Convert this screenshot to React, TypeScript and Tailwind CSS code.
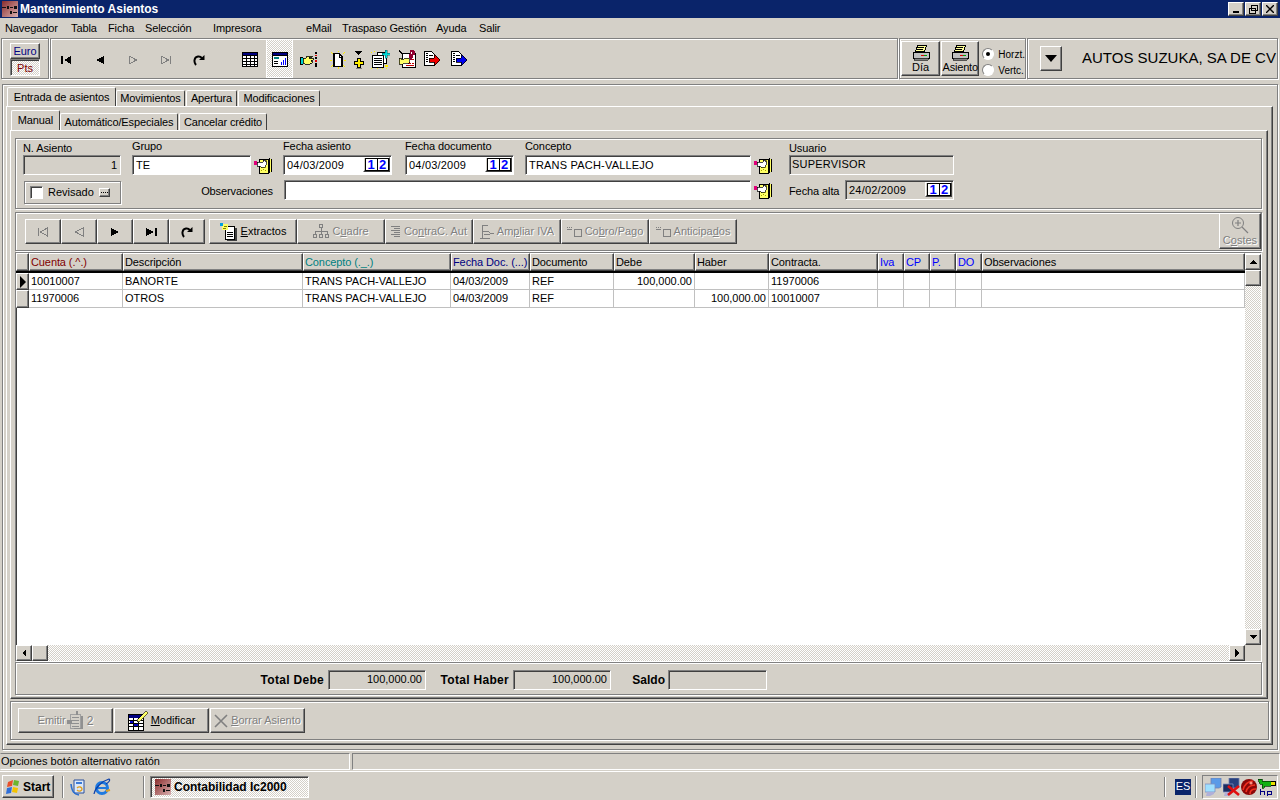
import React from 'react'

const raised = 'border border-t-white border-l-white border-r-[#404040] border-b-[#404040] shadow-[inset_-1px_-1px_0_#808080]'
const sunken = 'border border-t-[#808080] border-l-[#808080] border-r-white border-b-white shadow-[inset_1px_1px_0_#404040]'
const etched = 'border border-[#808080] shadow-[inset_1px_1px_0_#fff,1px_1px_0_#fff]'
const dither = 'bg-[repeating-conic-gradient(#fff_0_25%,#d4d0c8_0_50%)] bg-[length:2px_2px]'
const dim = 'text-[#808080] [text-shadow:1px_1px_0_#fff]'

function Ico({ w = 16, h = 16, children }: { w?: number; h?: number; children: React.ReactNode }) {
  return (
    <svg width={w} height={h} viewBox={`0 0 ${w} ${h}`} shapeRendering="crispEdges" className="shrink-0">
      {children}
    </svg>
  )
}

const AppLogo = () => (
  <Ico>
    <defs>
      <linearGradient id="lg" x1="0" y1="0" x2="1" y2="1">
        <stop offset="0" stopColor="#8a2c2c" />
        <stop offset="1" stopColor="#d8b0b0" />
      </linearGradient>
    </defs>
    <rect width="16" height="16" fill="url(#lg)" />
    <path d="M0 6h4v1H0zM5 5h2v3H5zM8 6h3v1H8zM12 5h3v3h-3zM8 10h2v3H8zM11 11h4v1h-4z" fill="#111" />
  </Ico>
)

const First = ({ off }: { off?: boolean }) => (
  <Ico w={12} h={10}>
    {off ? (
      <path d="M1 0.5V9M10.5 1L3 5l7.5 4z" fill="none" stroke="#808080" />
    ) : (
      <path d="M0 1h2v8H0zM10 1v8L3 5z" fill="#000" />
    )}
  </Ico>
)
const Prev = ({ off }: { off?: boolean }) => (
  <Ico w={10} h={10}>
    {off ? <path d="M9 1L1.5 5 9 9z" fill="none" stroke="#808080" /> : <path d="M9 1v8L1 5z" fill="#000" />}
  </Ico>
)
const Next = ({ off }: { off?: boolean }) => (
  <Ico w={10} h={10}>
    {off ? <path d="M1 1L8.5 5 1 9z" fill="none" stroke="#808080" /> : <path d="M1 1v8l8-4z" fill="#000" />}
  </Ico>
)
const Last = ({ off }: { off?: boolean }) => (
  <Ico w={12} h={10}>
    {off ? (
      <path d="M10.5 0.5V9M1 1l7.5 4L1 9z" fill="none" stroke="#808080" />
    ) : (
      <path d="M10 1h2v8h-2zM1 1v8l8-4z" fill="#000" />
    )}
  </Ico>
)
const Refresh = () => (
  <svg width="12" height="12" viewBox="0 0 12 12" className="shrink-0">
    <path d="M3 11C0.5 8 1 3 5 2.5c1.8-.2 3 .4 3.8 1.6" fill="none" stroke="#000" strokeWidth="2" />
    <path d="M6 6h5.5V1z" fill="#000" />
  </svg>
)
const TableIco = () => (
  <Ico w={16} h={15}>
    <rect width="16" height="15" fill="#000" />
    <rect x="1" y="1" width="14" height="2" fill="#000080" />
    <rect x="1" y="4" width="14" height="10" fill="#fff" />
    <path d="M1 6h14v1H1zM1 9h14v1H1zM1 12h14v1H1zM4 4h1v10H4zM8 4h1v10H8zM12 4h1v10h-1z" fill="#000" />
  </Ico>
)
const ChartIco = () => (
  <Ico w={16} h={15}>
    <rect width="16" height="15" fill="#000" />
    <rect x="1" y="1" width="14" height="2" fill="#000080" />
    <rect x="1" y="4" width="14" height="10" fill="#fff" />
    <path d="M2 5h5v2H2z" fill="#008080" />
    <path d="M2 9h4v1H2zM2 11h4v1H2z" fill="#000" />
    <path d="M9 10h1v3H9zM11 8h1v5h-1zM13 6h1v7h-1z" fill="#0000ff" />
  </Ico>
)
const HandIco = () => (
  <Ico w={17} h={15}>
    <path d="M0 5h3v8H0z" fill="#000" />
    <path d="M1 6h2v6H1z" fill="#00d0d0" />
    <path d="M3 6h3l1-2h5v1h-3v1h4v2h-2v1h1v2h-2v1H5l-2-1z" fill="#ffff66" stroke="#000" strokeWidth="0.8" />
    <path d="M15 0h2v2h-2zM15 5h2v2h-2zM15 11h2v2h-2zM15 13h2v2h-2z" fill="#000" />
    <path d="M15 3h2v1h-2zM15 8h2v2h-2z" fill="#e00000" />
  </Ico>
)
const NewDocIco = () => (
  <Ico w={16} h={18}>
    <path d="M1 1h1v1h1v1H2V2H1zM14 1h1v1h-1v1h-1V2h1zM0 9h2v1H0zM14 9h2v1h-2zM1 15h1v-1h1v1H2v1H1zM14 15h1v1h-1v-1h-1v-1h1zM8 16h1v2H8zM8 0h1v1H8z" fill="#ffee00" />
    <path d="M4 2.5h5l3 3v10H4z" fill="#fff" stroke="#000" strokeWidth="1.2" />
    <path d="M9 3v3h3" fill="none" stroke="#000" />
  </Ico>
)
const PlusIco = () => (
  <Ico w={11} h={18}>
    <path d="M2 0h7v1H8v1H7v1H6v1H5V3H4V2H3V1H2z" fill="#000" />
    <path d="M4 7h3v3h3v3H7v3H4v-3H1v-3h3z" fill="#ffee00" stroke="#000" />
    <path d="M3 17h6v1H3z" fill="#808080" />
  </Ico>
)
const DocsIco = () => (
  <Ico w={19} h={19}>
    <rect x="6.5" y="2.5" width="9" height="11" fill="#fff" stroke="#000" />
    <rect x="1.5" y="5.5" width="11" height="12" fill="#fff" stroke="#000" />
    <path d="M3 8h8v1H3zM3 10h8v1H3zM3 12h8v1H3zM3 14h8v1H3z" fill="#000" />
    <path d="M14 15h3v2h-3v-1zM0 2h1v1H0zM3 1h1v1H3zM0 18h1v1H0zM6 18h1v1H6zM11 18h1v1h-1zM15 18h1v1h-1z" fill="#ffee00" />
    <path d="M14 0h2v3h3v2h-3v3h-2V5h-3V3h3z" fill="#00d8d8" stroke="#004040" strokeWidth="0.4" />
  </Ico>
)
const DocQIco = () => (
  <Ico w={19} h={19}>
    <rect x="4.5" y="3.5" width="13" height="14" fill="#fff" stroke="#000" />
    <path d="M14 9h2v1h-2zM11 12h1v2h-1zM10 13h3v1h-3zM14 13h2v1h-2zM8 15h8v1H8z" fill="#c00000" />
    <path d="M1 8h2v1h3l2-1h3v5H7l-2 1H1z" fill="#ffff66" stroke="#000" strokeWidth="0.7" />
    <path d="M1 0h1v1h1v1h1v1h1v2H4V4H3V3H2V2H1z" fill="#000" />
    <path d="M11 0h5v1h1v4h-2v3h-4V4h1V1z" fill="#900030" />
    <path d="M12 8h2v2h-2z" fill="#900030" />
    <path d="M13 2h1v2h-1z" fill="#fff" />
  </Ico>
)
const ArrowDocIco = ({ color }: { color: string }) => (
  <Ico w={17} h={17}>
    <path d="M0.5 0.5h7l3 3v11H.5z" fill="#fff" stroke="#000" />
    <path d="M2 2h2v1H2zM2 4h2v1H2zM5 4h4v1H5zM2 6h2v1H2zM2 8h2v1H2zM2 10h2v1H2z" fill="#000" />
    <path d="M5 7h5V3l6 6-6 6v-4H5z" fill={color} stroke="#000" strokeWidth="0.8" />
  </Ico>
)
const LookupIco = () => (
  <Ico w={20} h={17}>
    <path d="M6 2h9v14H6z" fill="#ffff66" stroke="#000" />
    <path d="M8 10h1v1H8zM10 12h1v1h-1zM12 10h1v1h-1zM8 13h1v1H8zM12 13h1v1h-1zM10 4h1v1h-1zM13 3h1v1h-1z" fill="#a0a000" />
    <path d="M16 1h1v15h-1zM18 2h1v13h-1z" fill="#000" />
    <path d="M17 2h1v13h-1z" fill="#ffff66" />
    <path d="M4 5h6V3h2v1h1l1 3-2 2v1H8L6 9H4z" fill="#fff" stroke="#000" strokeWidth="0.7" />
    <path d="M1 4h3v4H1z" fill="#e0007a" />
  </Ico>
)
const PrinterIco = () => (
  <Ico w={18} h={16}>
    <path d="M5.5 0.5h9l-2 6h-9z" fill="#ffff99" stroke="#000" />
    <path d="M5 2h7v1H5zM5 4h6v1H5z" fill="#000" />
    <path d="M1 7h16v6H1z" fill="#c0c0c0" stroke="#000" />
    <path d="M2 13h14v2H2z" fill="#808080" stroke="#000" strokeWidth="0.6" />
    <path d="M9 10h3v1H9z" fill="#e00000" />
    <path d="M12 10h3v1h-3z" fill="#00a000" />
  </Ico>
)
const ExtractosIco = () => (
  <Ico w={18} h={18}>
    <path d="M5.5 3.5h9v13h-9z" fill="#fff" stroke="#000" />
    <path d="M7 9h6v1H7zM7 11h6v1H7zM7 13h6v1H7z" fill="#000" />
    <path d="M15 5h2v13H7v-1h8z" fill="#404040" />
    <path d="M2 1h6v6H2z" fill="#ffff66" />
    <path d="M0 0h3v3H0z" fill="#00a0e0" />
    <path d="M4 3h3v1H4zM3 5h3v1H3z" fill="#808000" />
  </Ico>
)
const CuadreIco = () => (
  <Ico w={16} h={15}>
    <path d="M6.5 0.5h3v3h-3zM0.5 10.5h3v3h-3zM12.5 10.5h3v3h-3zM6.5 10.5h3v3h-3zM8 4v6M2 10V7h12v3" fill="none" stroke="#808080" />
  </Ico>
)
const LinesIco = () => (
  <Ico w={10} h={11}>
    <path d="M0 0h9v1H0zM3 2h6v1H3zM0 4h9v1H0zM3 6h6v1H3zM0 8h9v1H0zM3 10h6v1H3z" fill="#808080" />
  </Ico>
)
const AmpliarIco = () => (
  <Ico w={14} h={14}>
    <path d="M2 0.5h6M2 0.5v12M0 13.5h10M2 6h6l2 2h4M4 9h6" fill="none" stroke="#808080" />
  </Ico>
)
const CobroIco = () => (
  <Ico w={15} h={11}>
    <path d="M0 1h1v1H0zM2 1h1v1H2zM4 1h1v1H4zM0 3h5v1H0z" fill="#808080" />
    <rect x="7.5" y="3.5" width="7" height="7" fill="none" stroke="#808080" />
  </Ico>
)
const LensIco = () => (
  <svg width="18" height="18" viewBox="0 0 18 18" className="shrink-0">
    <circle cx="7" cy="7" r="5.5" fill="none" stroke="#808080" />
    <path d="M7 4v6M4 7h6M11 11l6 6" stroke="#808080" strokeWidth="1.2" fill="none" />
  </svg>
)
const EmitirIco = () => (
  <Ico w={18} h={20}>
    <path d="M4.5 3.5h10v14h-10z" fill="none" stroke="#a0a0a0" />
    <path d="M6 6h7v1H6zM6 9h7v1H6zM6 12h7v1H6zM6 15h7v1H6zM10 0h2v4h-2zM1 9h5v4H1z" fill="#909090" />
    <path d="M15 5h2v13H8v-1h7z" fill="#909090" />
  </Ico>
)
const ModificarIco = () => (
  <Ico w={20} h={20}>
    <rect x="0.5" y="3.5" width="15" height="16" fill="#fff" stroke="#000" />
    <rect x="1" y="4" width="14" height="3" fill="#000080" />
    <path d="M1 9h14v1H1zM1 12h14v1H1zM1 15h14v1H1zM5 7h1v12H5zM10 7h1v12h-1z" fill="#000" />
    <path d="M2 10h3v2H2zM6 13h4v2H6z" fill="#0000c0" />
    <path d="M18 0l2 2-8 8-3 1 1-3z" fill="#ffff66" stroke="#000" strokeWidth="0.6" />
  </Ico>
)
const CrossIco = () => (
  <svg width="14" height="14" viewBox="0 0 14 14" className="shrink-0">
    <path d="M1 1l12 12M13 1L1 13" stroke="#808080" strokeWidth="1.6" />
  </svg>
)
const FlagIco = () => (
  <svg width="16" height="16" viewBox="0 0 16 16" className="shrink-0">
    <path d="M3 3l5-2-1 6-5 1z" fill="#e8502a" />
    <path d="M9 1l5 1-1 5-5-1z" fill="#6cb52d" />
    <path d="M2 9l5-1-1 6-5 1z" fill="#2f6fd8" />
    <path d="M8 8l5 1-1 5-5-1z" fill="#f4c300" />
  </svg>
)
const DesktopIco = () => (
  <svg width="16" height="18" viewBox="0 0 16 18" className="shrink-0">
    <path d="M4 2h10v13H4z" fill="#dbe8fa" stroke="#2a4f9a" />
    <path d="M6 4h6v2H6z" fill="#3a7ad8" />
    <path d="M1 6c1 8 3 10 8 11" fill="none" stroke="#2a6fd0" strokeWidth="1.6" />
    <path d="M7 10c2-2 5-1 5 1s-3 3-5 1" fill="none" stroke="#e0a020" strokeWidth="1.4" />
  </svg>
)
const IeIco = () => (
  <svg width="18" height="18" viewBox="0 0 18 18" className="shrink-0">
    <circle cx="9" cy="10" r="5.5" fill="none" stroke="#1f7ae0" strokeWidth="3" />
    <path d="M4 10h10" stroke="#1f7ae0" strokeWidth="2" />
    <path d="M1 16C2 10 9 3 16 1c2 1-1 4-3 5" fill="none" stroke="#0b3fa8" strokeWidth="1.2" />
    <path d="M13 13l4-1" stroke="#e0a020" strokeWidth="2" />
  </svg>
)
const NetIco = ({ x }: { x?: boolean }) => (
  <svg width="17" height="18" viewBox="0 0 17 18" className="shrink-0">
    <path d="M6 0h10v9l-2 1H6z" fill={x ? '#28407c' : '#5a9ae8'} stroke="#7080b0" strokeWidth="0.8" />
    <path d="M0 6h10v8H0z" fill={x ? '#1c2e60' : '#9fe0ff'} stroke="#8090c0" strokeWidth="0.8" />
    <path d="M2 14h7v2l-4 2H1z" fill="#b0b0d8" />
    {x && <path d="M5 8l11 9M16 8L5 17" stroke="#e01010" strokeWidth="2.6" />}
  </svg>
)
const BallIco = () => (
  <svg width="16" height="16" viewBox="0 0 16 16" className="shrink-0">
    <circle cx="8" cy="8" r="8" fill="#8c0808" />
    <path d="M2 11C3 6 7 2 12 2M5 13c1-4 4-7 9-7M9 15c0-3 2-5 6-5" fill="none" stroke="#f03020" strokeWidth="1.6" />
    <circle cx="10" cy="4" r="1.6" fill="#ff9080" />
  </svg>
)
const HpIco = () => (
  <Ico w={18} h={18}>
    <path d="M0 1h4v2h9v5H7l-1 2H4V6H2z" fill="#10b010" stroke="#003000" strokeWidth="0.7" />
    <path d="M12.5 3.5h5v4h-5" fill="none" stroke="#000" />
    <path d="M13 4h4v3h-4z" fill="#e8e000" />
    <path d="M2.5 11v6M2.5 13.5h4v3.5M9.5 13.5h4v3h-4zM9.5 13.5v5" fill="none" stroke="#000080" />
  </Ico>
)

// Calendar button with the two overlapping "12" pages
function CalBtn() {
  return (
    <div className={`w-[27px] h-[15px] mr-px mt-[1px] flex items-center justify-center bg-[#d4d0c8] ${raised} text-[#0000ff] font-bold text-[13px] leading-none`}>
      <span className="w-[12px] h-[13px] bg-white border-y border-l border-black flex items-center justify-center">1</span>
      <span className="w-[12px] h-[13px] bg-white border border-black flex items-center justify-center">2</span>
    </div>
  )
}

function DateInput({ value, grey, w = 'w-[109px]' }: { value: string; grey?: boolean; w?: string }) {
  return (
    <div className={`${w} h-[20px] ${sunken} ${grey ? '' : 'bg-white'} flex justify-between pl-[3px]`}>
      <span className="leading-[19px] tracking-[0.2px]">{value}</span>
      <CalBtn />
    </div>
  )
}

function Field({ label, low, className, children }: { label: string; low?: boolean; className: string; children: React.ReactNode }) {
  return (
    <div className={className}>
      <div className={`h-[14px] tracking-[-0.1px] whitespace-nowrap ${low ? 'leading-[15px]' : 'leading-[11px]'}`}>{label}</div>
      {children}
    </div>
  )
}

function Tab({ label, active, w }: { label: string; active?: boolean; w: string }) {
  return (
    <div
      className={`${w} border-t border-l border-r border-t-white border-l-white border-r-[#404040] rounded-t-[2px] flex items-center justify-center shrink-0 tracking-[-0.12px] ${
        active ? 'h-full relative z-10 -mb-px bg-[#d4d0c8]' : 'h-[calc(100%-3px)] mt-[3px] mr-[1px]'
      }`}
    >
      {label}
    </div>
  )
}

function ToolBtn({ w, off, icon, children }: { w: string; off?: boolean; icon?: React.ReactNode; children?: React.ReactNode }) {
  return (
    <div className={`${w} h-[25px] ${raised} flex items-center justify-center gap-[3px] shrink-0 whitespace-nowrap ${off ? dim : ''}`}>
      {icon}
      {children && <span>{children}</span>}
    </div>
  )
}

const menu = [
  { t: 'Navegador', w: 'w-[66px]' },
  { t: 'Tabla', w: 'w-[37px]' },
  { t: 'Ficha', w: 'w-[37px]' },
  { t: 'Selección', w: 'w-[68px]' },
  { t: 'Impresora', w: 'w-[93px]' },
  { t: 'eMail', w: 'w-[36px]' },
  { t: 'Traspaso Gestión', w: 'w-[94px]' },
  { t: 'Ayuda', w: 'w-[43px]' },
  { t: 'Salir', w: 'w-[30px]' },
]

const cols = 'grid grid-cols-[13px_94px_180px_148px_79px_84px_81px_74px_109px_26px_26px_26px_26px_263px]'

const headers = [
  { t: 'Cuenta (.^.)', c: 'text-[#800000]' },
  { t: 'Descripción', c: '' },
  { t: 'Concepto (._.)', c: 'text-[#008080]' },
  { t: 'Fecha Doc. (...)', c: 'text-[#000080]' },
  { t: 'Documento', c: '' },
  { t: 'Debe', c: '' },
  { t: 'Haber', c: '' },
  { t: 'Contracta.', c: '' },
  { t: 'Iva', c: 'text-[#0000ff]' },
  { t: 'CP', c: 'text-[#0000ff]' },
  { t: 'P.', c: 'text-[#0000ff]' },
  { t: 'DO', c: 'text-[#0000ff]' },
  { t: 'Observaciones', c: '' },
]

const rows = [
  { h: 'h-[17px]', sel: true, cells: ['10010007', 'BANORTE', 'TRANS PACH-VALLEJO', '04/03/2009', 'REF', '100,000.00', '', '11970006', '', '', '', '', ''] },
  { h: 'h-[18px]', sel: false, cells: ['11970006', 'OTROS', 'TRANS PACH-VALLEJO', '04/03/2009', 'REF', '', '100,000.00', '10010007', '', '', '', '', ''] },
]

const ArrowBtn = ({ dir }: { dir: 'up' | 'down' | 'left' | 'right' }) => (
  <div className={`w-[16px] h-[16px] shrink-0 bg-[#d4d0c8] ${raised} flex items-center justify-center`}>
    <svg width="8" height="8" viewBox="0 0 8 8" shapeRendering="crispEdges">
      {dir === 'up' && <path d="M0 6h8L4 2z" fill="#000" />}
      {dir === 'down' && <path d="M0 2h8L4 6z" fill="#000" />}
      {dir === 'left' && <path d="M6 0v8L2 4z" fill="#000" />}
      {dir === 'right' && <path d="M2 0v8l4-4z" fill="#000" />}
    </svg>
  </div>
)

export default function App() {
  return (
    <div className="w-[1280px] h-[800px] overflow-hidden flex flex-col bg-[#d4d0c8] text-black text-[11px] [font-family:'Liberation_Sans',sans-serif]">
      {/* Title bar */}
      <div className="h-[18px] shrink-0 bg-[#0a246a] flex items-center pl-[2px] pr-[2px] text-white">
        <AppLogo />
        <span className="ml-[2px] font-bold text-[12px]">Mantenimiento Asientos</span>
        <div className="ml-auto flex items-center text-black">
          <div className={`w-[16px] h-[14px] bg-[#d4d0c8] ${raised} flex items-end justify-center pb-[2px]`}>
            <div className="w-[6px] h-[2px] bg-black" />
          </div>
          <div className={`w-[16px] h-[14px] ml-[1px] bg-[#d4d0c8] ${raised} flex items-center justify-center`}>
            <svg width="9" height="9" viewBox="0 0 9 9" shapeRendering="crispEdges">
              <path d="M2.5 .5h6v5h-6zM.5 3.5h6v5h-6z" fill="#d4d0c8" stroke="#000" />
            </svg>
          </div>
          <div className={`w-[16px] h-[14px] ml-[1px] bg-[#d4d0c8] ${raised} flex items-center justify-center`}>
            <svg width="8" height="8" viewBox="0 0 8 8">
              <path d="M0 0l8 8M8 0L0 8" stroke="#000" strokeWidth="1.4" />
            </svg>
          </div>
        </div>
      </div>

      {/* Menu */}
      <div className="h-[20px] shrink-0 flex items-center pl-[5px] tracking-[-0.12px]">
        {menu.map((m) => (
          <span key={m.t} className={`${m.w} whitespace-nowrap shrink-0`}>{m.t}</span>
        ))}
      </div>

      {/* Main toolbar */}
      <div className="h-[41px] shrink-0 flex items-stretch px-px">
        <div className={`w-[48px] ${etched} flex flex-col pl-[8px] pt-[4px] shrink-0`}>
          <div className={`w-[30px] h-[16px] ${raised} flex items-center justify-center text-[#000080]`}>Euro</div>
          <div className={`w-[30px] h-[17px] pt-px ${sunken} ${dither} flex items-center justify-center text-[#800000]`}>Pts</div>
        </div>
        <div className={`w-[848px] ml-px pt-[2px] ${etched} flex items-center shrink-0`}>
          <div className="w-[32px] flex justify-center"><First /></div>
          <div className="w-[33px] flex justify-center"><Prev /></div>
          <div className="w-[33px] flex justify-center"><Next off /></div>
          <div className="w-[33px] flex justify-center"><Last off /></div>
          <div className="w-[33px] flex justify-center"><Refresh /></div>
          <div className="w-[19px]" />
          <div className="w-[32px] flex justify-center"><TableIco /></div>
          <div className={`w-[27px] h-[calc(100%+2px)] -mt-[2px] pt-[2px] border border-white ${dither} flex items-center justify-center`}><ChartIco /></div>
          <div className="w-[31px] flex justify-center"><HandIco /></div>
          <div className="w-[27px] flex justify-center"><NewDocIco /></div>
          <div className="w-[15px] flex justify-center"><PlusIco /></div>
          <div className="w-[29px] flex justify-center"><DocsIco /></div>
          <div className="w-[24px] flex justify-center"><DocQIco /></div>
          <div className="w-[27px] flex justify-center"><ArrowDocIco color="#f00000" /></div>
          <div className="w-[27px] flex justify-center"><ArrowDocIco color="#0000f0" /></div>
        </div>
        <div className={`w-[127px] ml-px ${etched} flex items-center pl-px shrink-0`}>
          <div className={`w-[40px] h-[35px] ${raised} flex flex-col items-center justify-end text-[11px] leading-[13px] pb-px`}>
            <PrinterIco />
            <span>Día</span>
          </div>
          <div className={`w-[39px] h-[35px] ml-px ${raised} flex flex-col items-center justify-end text-[11px] leading-[13px] pb-px tracking-[-0.2px]`}>
            <PrinterIco />
            <span>Asiento</span>
          </div>
          <div className="flex flex-col gap-[4px] ml-[3px] mt-[7px] text-[10px]">
            <div className="flex items-center gap-[4px] h-[12px]">
              <div className="w-[12px] h-[12px] rounded-full bg-white border border-t-[#808080] border-l-[#808080] border-r-white border-b-white flex items-center justify-center">
                <div className="w-[4px] h-[4px] rounded-full bg-black" />
              </div>
              <span>Horzt.</span>
            </div>
            <div className="flex items-center gap-[4px] h-[12px]">
              <div className="w-[12px] h-[12px] rounded-full bg-white border border-t-[#808080] border-l-[#808080] border-r-white border-b-white" />
              <span>Vertc.</span>
            </div>
          </div>
        </div>
        <div className={`flex-1 ml-px ${etched} flex items-center pl-[12px] mr-px`}>
          <div className={`w-[22px] h-[25px] ${raised} flex items-center justify-center shrink-0`}>
            <svg width="12" height="7" viewBox="0 0 12 7"><path d="M0 0h12L6 7z" fill="#000" /></svg>
          </div>
          <span className="ml-[20px] text-[15px] whitespace-nowrap">AUTOS SUZUKA, SA DE CV</span>
        </div>
      </div>

      <div className="h-[5px] shrink-0" />

      {/* Outer page control */}
      <div className={`h-[666px] shrink-0 mx-[2px] ${etched} flex flex-col pt-[2px] pl-[3px] pr-[4px]`}>
        <div className="h-[19px] flex shrink-0 pl-px">
          <Tab label="Entrada de asientos" active w="w-[109px]" />
          <Tab label="Movimientos" w="w-[69px]" />
          <Tab label="Apertura" w="w-[51px]" />
          <Tab label="Modificaciones" w="w-[82px]" />
        </div>
        <div className={`h-[639px] shrink-0 ${raised} flex flex-col pt-[3px] pl-[3px] pr-[4px]`}>
          <div className="h-[20px] flex shrink-0 pl-px">
            <Tab label="Manual" active w="w-[49px]" />
            <Tab label="Automático/Especiales" w="w-[118px]" />
            <Tab label="Cancelar crédito" w="w-[88px]" />
          </div>

          <div className={`h-[569px] shrink-0 ${raised} flex flex-col pt-[7px] pl-[4px] pr-[5px]`}>
            {/* Entry form */}
            <div className={`h-[71px] shrink-0 ${etched} pt-[2px] pl-[7px]`}>
              <div className="flex items-end">
                <Field label="N. Asiento" low className="w-[98px]">
                  <div className={`h-[20px] ${sunken} text-right pr-[3px] leading-[19px]`}>1</div>
                </Field>
                <Field label="Grupo" className="w-[119px] ml-[11px]">
                  <div className={`h-[20px] ${sunken} bg-white pl-[3px] leading-[19px]`}>TE</div>
                </Field>
                <div className="ml-[2px] w-[20px] h-[20px] flex items-center"><LookupIco /></div>
                <Field label="Fecha asiento" className="w-[109px] ml-[10px]">
                  <DateInput value="04/03/2009" />
                </Field>
                <Field label="Fecha documento" className="w-[109px] ml-[13px]">
                  <DateInput value="04/03/2009" />
                </Field>
                <Field label="Concepto" className="w-[226px] ml-[11px]">
                  <div className={`h-[20px] ${sunken} bg-white pl-[3px] leading-[19px] tracking-[0.2px]`}>TRANS PACH-VALLEJO</div>
                </Field>
                <div className="ml-[2px] w-[20px] h-[20px] flex items-center"><LookupIco /></div>
                <Field label="Usuario" low className="w-[165px] ml-[16px]">
                  <div className={`h-[20px] ${sunken} pl-[2px] leading-[17px] tracking-[0.2px]`}>SUPERVISOR</div>
                </Field>
              </div>
              <div className="flex items-start mt-[5px]">
                <div className={`w-[97px] h-[23px] ml-px mt-px ${etched} flex items-center pl-[5px]`}>
                  <div className={`w-[13px] h-[13px] bg-white ${sunken}`} />
                  <span className="ml-[5px]">Revisado</span>
                  <div className={`ml-[5px] w-[11px] h-[9px] ${raised} flex items-center justify-center`}>
                    <div className="w-[7px] h-px border-t border-dotted border-black" />
                  </div>
                </div>
                <div className="w-[152px] text-right h-[20px] leading-[22px] tracking-[-0.12px]">Observaciones</div>
                <div className={`w-[467px] h-[20px] ml-[11px] ${sunken} bg-white`} />
                <div className="ml-[2px] w-[20px] h-[20px] flex items-center"><LookupIco /></div>
                <div className="ml-[16px] w-[52px] h-[20px] leading-[22px] whitespace-nowrap tracking-[-0.1px]">Fecha alta</div>
                <div className="ml-[4px]"><DateInput value="24/02/2009" grey /></div>
              </div>
            </div>

            {/* Grid toolbar */}
            <div className={`h-[39px] mt-[3px] shrink-0 ${etched} flex items-center pl-[9px]`}>
              <ToolBtn w="w-[36px]" off icon={<First off />} />
              <ToolBtn w="w-[36px]" off icon={<Prev off />} />
              <ToolBtn w="w-[36px]" icon={<Next />} />
              <ToolBtn w="w-[36px]" icon={<Last />} />
              <ToolBtn w="w-[36px]" icon={<Refresh />} />
              <div className="w-[4px] shrink-0" />
              <ToolBtn w="w-[88px]" icon={<ExtractosIco />}><u>E</u>xtractos</ToolBtn>
              <ToolBtn w="w-[88px]" off icon={<CuadreIco />}>C<u>u</u>adre</ToolBtn>
              <ToolBtn w="w-[88px]" off icon={<LinesIco />}>Co<u>n</u>traC. Aut</ToolBtn>
              <ToolBtn w="w-[88px]" off icon={<AmpliarIco />}>Am<u>p</u>liar IVA</ToolBtn>
              <ToolBtn w="w-[88px]" off icon={<CobroIco />}>Co<u>b</u>ro/Pago</ToolBtn>
              <ToolBtn w="w-[88px]" off icon={<CobroIco />}>Anticipa<u>d</u>os</ToolBtn>
              <div className={`ml-auto w-[42px] h-[36px] self-start ${raised} ${dim} flex flex-col items-center justify-end pb-px leading-[13px]`}>
                <LensIco />
                <span>C<u>o</u>stes</span>
              </div>
            </div>

            {/* Grid */}
            <div className={`h-[410px] mt-px shrink-0 ${sunken} flex flex-col bg-white`}>
              <div className="flex-1 flex min-h-0">
                <div className="w-[1229px] shrink-0">
                  <div className={`${cols} h-[20px] border-b-2 border-black bg-[#d4d0c8]`}>
                    <div className={raised} />
                    {headers.map((h) => (
                      <div key={h.t} className={`${raised} ${h.c} pl-px leading-[16px] whitespace-nowrap overflow-hidden tracking-[-0.1px]`}>{h.t}</div>
                    ))}
                  </div>
                  {rows.map((r, i) => (
                    <div key={i} className={`${cols} ${r.h}`}>
                      <div className={`${raised} bg-[#d4d0c8] flex items-center`}>
                        {r.sel && (
                          <svg width="8" height="12" viewBox="0 0 8 12" className="ml-[2px]"><path d="M1 0v12l6-6z" fill="#000" /></svg>
                        )}
                      </div>
                      {r.cells.map((c, j) => (
                        <div
                          key={j}
                          className={`border-r border-b border-[#c0c0c0] px-[2px] flex items-center whitespace-nowrap overflow-hidden ${
                            j === 5 || j === 6 ? 'justify-end' : ''
                          }`}
                        >
                          {c}
                        </div>
                      ))}
                    </div>
                  ))}
                </div>
                <div className={`w-[16px] shrink-0 flex flex-col ${dither}`}>
                  <div className="h-[1px] bg-white shrink-0" />
                  <ArrowBtn dir="up" />
                  <div className={`h-[16px] shrink-0 bg-[#d4d0c8] ${raised}`} />
                  <div className="flex-1" />
                  <ArrowBtn dir="down" />
                </div>
              </div>
              <div className="h-[16px] shrink-0 flex bg-[#d4d0c8]">
                <div className={`w-[1229px] shrink-0 flex ${dither}`}>
                  <ArrowBtn dir="left" />
                  <div className={`w-[16px] shrink-0 bg-[#d4d0c8] ${raised}`} />
                  <div className="flex-1" />
                  <ArrowBtn dir="right" />
                </div>
              </div>
            </div>

            {/* Totals */}
            <div className={`h-[33px] shrink-0 ${etched} flex items-center pt-[2px]`}>
              <div className="w-[308px] shrink-0 text-right font-bold text-[12px] tracking-[0.3px]">Total Debe</div>
              <div className={`w-[98px] h-[20px] ml-[4px] ${sunken} text-right pr-[3px] leading-[16px]`}>100,000.00</div>
              <div className="w-[83px] shrink-0 text-right font-bold text-[12px] tracking-[0.3px]">Total Haber</div>
              <div className={`w-[98px] h-[20px] ml-[4px] ${sunken} text-right pr-[3px] leading-[16px]`}>100,000.00</div>
              <div className="w-[54px] shrink-0 text-right font-bold text-[12px]">Saldo</div>
              <div className={`w-[99px] h-[20px] ml-[3px] ${sunken}`} />
            </div>
          </div>

          {/* Bottom buttons */}
          <div className={`h-[39px] mt-[2px] -mr-px shrink-0 ${etched} flex items-center pl-[7px] gap-px`}>
            <div className={`w-[95px] h-[25px] ${raised} ${dim} flex items-center justify-center shrink-0`}>
              <span>Emitir</span>
              <EmitirIco />
              <span className="ml-[3px] text-[12px]">2</span>
            </div>
            <ToolBtn w="w-[95px]" icon={<ModificarIco />}><u>M</u>odificar</ToolBtn>
            <ToolBtn w="w-[95px]" off icon={<CrossIco />}><u>B</u>orrar Asiento</ToolBtn>
          </div>
        </div>
      </div>

      <div className="h-[3px] shrink-0" />

      {/* Status bar */}
      <div className="h-[17px] shrink-0 flex">
        <div className="w-[350px] border border-t-[#808080] border-l-transparent border-r-white border-b-white leading-[15px] whitespace-nowrap">
          Opciones botón alternativo ratón
        </div>
        <div className="flex-1 ml-[2px] border border-t-[#808080] border-l-[#808080] border-r-white border-b-white" />
      </div>

      {/* Taskbar */}
      <div className="h-[30px] shrink-0 border-t border-white mt-px flex items-center pl-[2px] pr-[2px]">
        <div className={`w-[52px] h-[23px] ${raised} flex items-center pl-[2px] gap-[2px] font-bold text-[12px]`}>
          <FlagIco />
          <span>Start</span>
        </div>
        <div className="ml-[8px] w-[2px] h-[22px] border-l border-[#808080] bg-white" />
        <div className="ml-[6px]"><DesktopIco /></div>
        <div className="ml-[7px]"><IeIco /></div>
        <div className="ml-[32px] w-[2px] h-[22px] border-l border-[#808080] bg-white" />
        <div className={`ml-[5px] w-[159px] h-[22px] ${sunken} ${dither} flex items-center pl-[4px] gap-[3px] font-bold text-[12px] whitespace-nowrap`}>
          <AppLogo />
          <span>Contabilidad Ic2000</span>
        </div>
        <div className="ml-auto w-[2px] h-[20px] border-l border-[#808080] bg-white mr-[9px]" />
        <div className="w-[16px] h-[16px] bg-[#0a246a] text-white text-[11px] flex items-center justify-center">ES</div>
        <div className="ml-[4px] w-[2px] h-[22px] border-l border-[#808080] bg-white" />
        <div className="ml-[5px] w-[76px] h-[24px] border border-t-[#808080] border-l-[#808080] border-r-white border-b-white flex items-center justify-end gap-px pr-px">
          <NetIco />
          <NetIco x />
          <BallIco />
          <HpIco />
        </div>
      </div>
    </div>
  )
}
